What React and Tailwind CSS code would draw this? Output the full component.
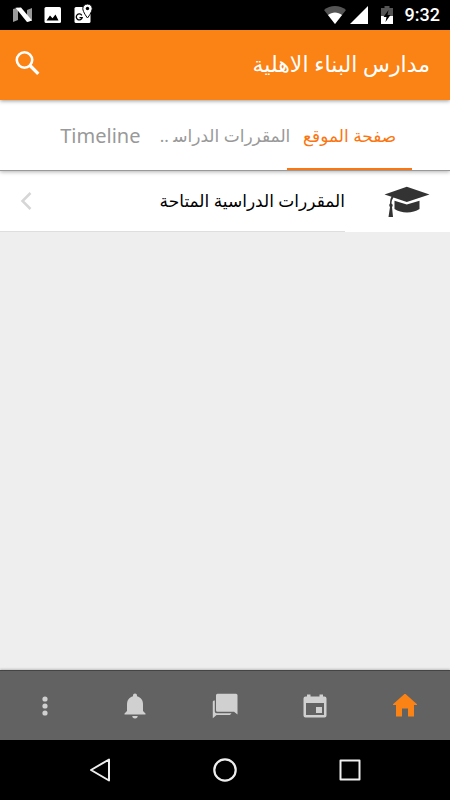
import { useState } from 'react';

const tabs = [
  { id: 'home', label: 'صفحة الموقع', size: 'text-[17px]' },
  { id: 'courses', label: 'المقررات الدراس\u200d ..', size: 'text-[17px]' },
  { id: 'timeline', label: 'Timeline', size: 'text-xl' },
];

function StatusBar() {
  return (
    <div dir="ltr" className="flex h-[30px] shrink-0 items-center bg-black pr-[10px] pl-3 text-white">
      <svg className="h-5 w-5" viewBox="0 0 20 20">
        <path d="M1 4L6 2.700V15L1 17zM15 5L20 3V15.500L15 17z" fill="#999" />
        <path d="M3.500 2.800L9 2.500 20 15.500 15 17z" fill="#fff" />
      </svg>
      <svg className="ml-3 h-5 w-5" viewBox="0 0 20 20">
        <rect x="0.500" y="2" width="16.500" height="16" rx="1.500" fill="#fff" />
        <path d="M2.500 15.500L6 10.500 8.500 13.300 11.500 9.500 14.500 15.500z" fill="#000" />
      </svg>
      <svg className="ml-2.5 h-5 w-5 overflow-visible" viewBox="0 0 20 20">
        <rect x="0.500" y="2" width="16" height="16" rx="1.500" fill="#fff" />
        <path d="M7.800 10.300A3 3 0 1 0 8.200 12.700H5.500" fill="none" stroke="#000" strokeWidth="1.300" />
        <path d="M13.500-1C10.800-1 8.800 1 8.800 3.500c0 3.500 4.700 9.500 4.700 9.500s4.700-6 4.700-9.500C18.200 1 16.200-1 13.500-1z" fill="#fff" stroke="#000" strokeWidth="1" />
        <circle cx="13.500" cy="3.500" r="1.700" fill="#000" />
      </svg>
      <div className="grow" />
      <svg className="h-[18px] w-[22px]" viewBox="0 0 22 18">
        <path d="M0 4C6-1.300 16-1.300 22 4L11 18z" fill="#555" />
        <path d="M4 9C8 5.600 14 5.600 18 9L11 18z" fill="#fff" />
      </svg>
      <svg className="ml-1 h-[18px] w-[18px]" viewBox="0 0 18 18">
        <path d="M18 0V18H0z" fill="#fff" />
      </svg>
      <svg className="ml-[13px] h-[18px] w-3" viewBox="0 0 12 18">
        <path d="M0 2H3.500V0H8.500V2H12V18H0z" fill="#555" />
        <path d="M0 10H12V18H0z" fill="#fff" />
        <path d="M7.500 4L2.500 11H5.500L4.500 16 9.500 9H6.500z" fill="#000" />
      </svg>
      <span className="ml-3 font-[Roboto,sans-serif] text-lg leading-none font-medium">9:32</span>
    </div>
  );
}

function CapIcon() {
  return (
    <svg className="h-8 w-[46px]" viewBox="0 0 46 32" fill="#333">
      <path d="M.5 8.500L22.800.8 45.500 8.500 22.800 16 9.500 11.500C8 13.500 7.600 15.500 7.500 17.500 9 18.500 9 20 8 21L9 31H4.500L6 21C5 20 5 18.500 6 17.500 6 14.500 6.500 12.500 7.500 10.800z" />
      <path d="M10.500 14.700L22.800 18.500 35.500 14.700V23C29 27.500 17 27.500 10.500 23z" />
    </svg>
  );
}

function HomeIcon() {
  return (
    <svg className="h-6 w-6" viewBox="0 1 24 24" fill="#fb8214">
      <path d="M12 0.500L24 11.300V12H21V23.500H15V15.500H9V23.500H3V12H0V11.300z" />
    </svg>
  );
}

function CalendarIcon() {
  return (
    <svg className="h-6 w-6" viewBox="0 0 24 24" fill="#d0d0d0">
      <path fillRule="evenodd" d="M4 .5H7.500V2.500H16.500V.5H20V2.500H21.500A2 2 0 0 1 23.500 4.500V21.500A2 2 0 0 1 21.500 23.500H2.500A2 2 0 0 1 .5 21.500V4.500A2 2 0 0 1 2.500 2.500H4zM3 9V21H21V9z" />
      <path d="M13 13H19V19H13z" />
    </svg>
  );
}

function ChatIcon() {
  return (
    <svg className="h-[26px] w-[26px]" viewBox="0 0 26 26" fill="#d0d0d0">
      <path d="M5.500.8H24A1.500 1.500 0 0 1 25.500 2.300V21.500L22 18.800H5.500A1.500 1.500 0 0 1 4 17.300V2.300A1.500 1.500 0 0 1 5.500.8z" />
      <path d="M2.800 7.500V18.500A1.800 1.800 0 0 0 4.600 20.300H19.500L18 22H4.500L.8 25.300V9A1.500 1.500 0 0 1 2.800 7.500z" />
    </svg>
  );
}

function BellIcon() {
  return (
    <svg className="h-[26px] w-[22px]" viewBox="0 0 22 26" fill="#d0d0d0">
      <path d="M11 .5A2 2 0 0 1 13 2.600V3.300C17 4.300 19 7.500 19 11.500V18L21.500 20.500V21.500H.5V20.500L3 18V11.500C3 7.500 5 4.300 9 3.300V2.600A2 2 0 0 1 11 .5z" />
      <path d="M8.300 23H13.700A2.700 2.500 0 0 1 8.300 23z" />
    </svg>
  );
}

function MoreIcon() {
  return (
    <svg className="h-6 w-6" viewBox="0 0 24 24" fill="#d0d0d0">
      <circle cx="12" cy="5" r="2.600" />
      <circle cx="12" cy="12" r="2.600" />
      <circle cx="12" cy="19" r="2.600" />
    </svg>
  );
}

const navItems = [
  { id: 'home', label: 'الرئيسية', Icon: HomeIcon },
  { id: 'calendar', label: 'التقويم', Icon: CalendarIcon },
  { id: 'messages', label: 'الرسائل', Icon: ChatIcon },
  { id: 'notifications', label: 'الإشعارات', Icon: BellIcon },
  { id: 'more', label: 'المزيد', Icon: MoreIcon },
];

export default function App() {
  const [tab, setTab] = useState('home');

  return (
    <div
      dir="rtl"
      lang="ar"
      className="flex min-h-screen flex-col bg-[#eee] font-['Noto_Sans','DejaVu_Sans',sans-serif]"
    >
      <StatusBar />

      <header className="z-20 flex h-[70px] shrink-0 items-center justify-between bg-[#fb8214] pr-5 pb-1 pl-[14px] text-white shadow-[0_1px_4px_rgba(0,0,0,0.4)]">
        <h1 className="text-[22px] leading-7">مدارس البناء الاهلية</h1>
        <button type="button" aria-label="بحث">
          <svg className="h-7 w-7" viewBox="0 0 28 28" fill="none" stroke="#fff">
            <circle cx="10.500" cy="11" r="7.700" strokeWidth="2.600" />
            <path d="M16 16.500L24.300 24.800" strokeWidth="3.300" />
          </svg>
        </button>
      </header>

      <div
        role="tablist"
        className="z-10 grid h-[71px] shrink-0 grid-cols-3 border-b border-[#999] bg-white px-[38px] shadow-[0_1px_4px_rgba(0,0,0,0.3)]"
      >
        {tabs.map((t) => (
          <button
            key={t.id}
            type="button"
            role="tab"
            aria-selected={tab === t.id}
            onClick={() => setTab(t.id)}
            className={`flex items-center justify-center border-b-2 pt-1 whitespace-nowrap ${t.size} ${
              tab === t.id ? 'border-[#fb7610] text-[#fb7610]' : 'border-transparent text-[#999]'
            }`}
          >
            {t.label}
          </button>
        ))}
      </div>

      <main className="grow">
        <a href="#courses" className="flex bg-white text-black">
          <div className="flex h-[61px] w-[105px] items-center pr-5">
            <CapIcon />
          </div>
          <div className="flex grow items-center justify-between border-b border-[#dedede] pl-5">
            <span className="text-[17px]">المقررات الدراسية المتاحة</span>
            <svg className="h-[18px] w-3" viewBox="0 0 12 18" fill="none" stroke="#d6d6d6" strokeWidth="2.500">
              <path d="M10.500 1L2.500 9 10.500 17" />
            </svg>
          </div>
        </a>
      </main>

      <nav className="grid h-[70px] shrink-0 grid-cols-5 border-t border-[#444] bg-[#626262] shadow-[0_-1px_2px_rgba(0,0,0,0.2)]">
        {navItems.map(({ id, label, Icon }) => (
          <button key={id} type="button" aria-label={label} className="flex items-center justify-center">
            <Icon />
          </button>
        ))}
      </nav>

      <div dir="ltr" className="grid h-[60px] shrink-0 grid-cols-3 bg-black px-[38px]">
        <button type="button" aria-label="رجوع" className="flex items-center justify-center">
          <svg className="h-6 w-6" viewBox="0 0 24 24" fill="none" stroke="#eee" strokeWidth="2" strokeLinejoin="round">
            <path d="M21 1.500V22.500L3 12z" />
          </svg>
        </button>
        <button type="button" aria-label="الشاشة الرئيسية" className="flex items-center justify-center">
          <svg className="h-6 w-6" viewBox="0 0 24 24" fill="none" stroke="#eee" strokeWidth="2.200">
            <circle cx="12" cy="12" r="10.700" />
          </svg>
        </button>
        <button type="button" aria-label="التطبيقات الأخيرة" className="flex items-center justify-center">
          <svg className="h-6 w-6" viewBox="0 0 24 24" fill="none" stroke="#eee" strokeWidth="2" strokeLinejoin="round">
            <path d="M2.500 2.500H21.500V21.500H2.500z" />
          </svg>
        </button>
      </div>
    </div>
  );
}
